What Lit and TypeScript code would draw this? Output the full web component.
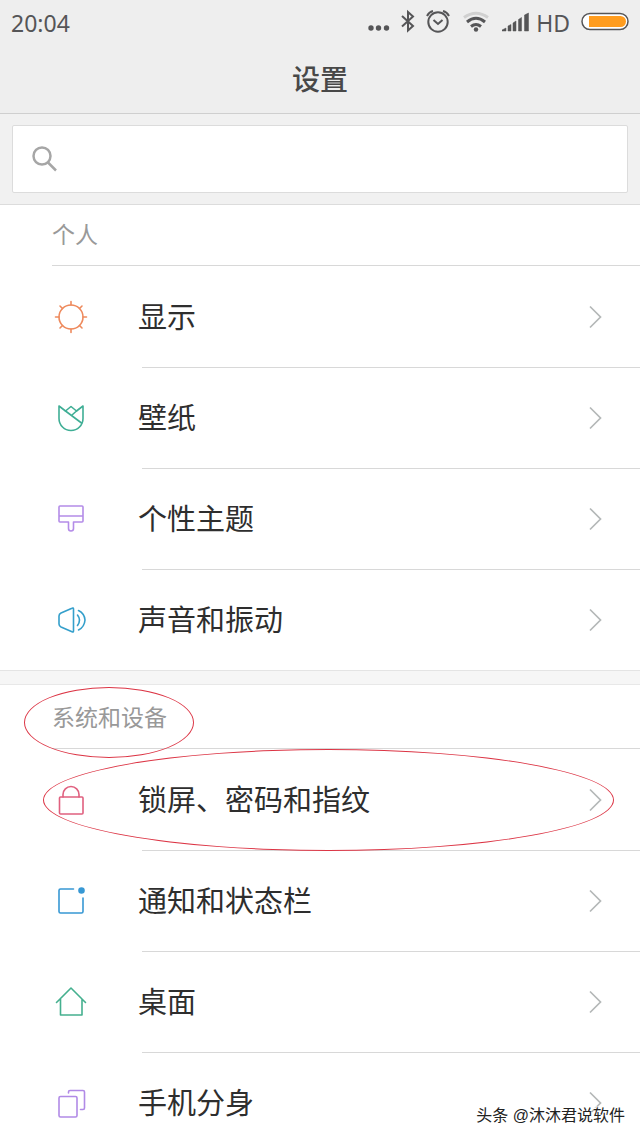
import { LitElement, html, css, svg, TemplateResult } from "lit";
import { customElement } from "lit/decorators.js";

interface Item {
  label: string;
  color: string;
  icon: TemplateResult;
}

const personal: Item[] = [
  {
    label: "显示",
    color: "#ee8a5d",
    icon: svg`<circle cx="18" cy="18" r="12"/>
      <path d="M18 6V2.5M18 30v3.5M6 18H2.5M30 18h3.5M9.5 9.5 7 7M26.5 9.5 29 7M9.5 26.5 7 29M26.5 26.5 29 29"/>`,
  },
  {
    label: "壁纸",
    color: "#3fae95",
    icon: svg`<path d="M12.5 11 6 6v12.500a12 12 0 0 0 24 0V6l-6.500 5"/>
      <path d="M12.5 11 18 6.500 23.500 11 19 15M12.500 11 28.500 23"/>`,
  },
  {
    label: "个性主题",
    color: "#b48ce8",
    icon: svg`<path d="M7 5h22a1 1 0 0 1 1 1v14a1 1 0 0 1-1 1h-8.5v6.500a2.500 2.500 0 0 1-5 0V21H7a1 1 0 0 1-1-1V6a1 1 0 0 1 1-1ZM6 15h24"/>`,
  },
  {
    label: "声音和振动",
    color: "#349fcb",
    icon: svg`<path d="M20.5 7v22q0 1.500-1.500.8L8 25q-2-1-2-3v-8q0-2 2-3l11-4.800q1.500-.7 1.500.8Z"/>
      <path d="M24.500 13q4 5 0 10.500M25.500 8.500q6 3 6.500 9.500-.5 7-6.500 10"/>`,
  },
];

const device: Item[] = [
  {
    label: "锁屏、密码和指纹",
    color: "#e0607f",
    icon: svg`<rect x="6.5" y="15" width="23.5" height="17" rx="1"/>
      <path d="M10 15v-2.500a8 8 0 0 1 16 0V15"/>`,
  },
  {
    label: "通知和状态栏",
    color: "#3798d4",
    icon: svg`<path d="M20.5 6H7.500Q6 6 6 7.500v21Q6 30 7.500 30h21q1.500 0 1.500-1.500V15"/>
      <circle cx="28.5" cy="7.5" r="2.5" fill="currentColor"/>`,
  },
  {
    label: "桌面",
    color: "#45b08f",
    icon: svg`<path d="M3.500 18.500 18 4l14.500 14.500M7.500 15v16h21.500V15"/>`,
  },
  {
    label: "手机分身",
    color: "#b18ae6",
    icon: svg`<rect x="6" y="11.5" width="18" height="20.5" rx="1.5"/>
      <path d="M15.500 8V7q0-1.500 1.500-1.500h13q1.500 0 1.500 1.500v16q0 1.500-1.500 1.500h-2.500"/>`,
  },
];

@customElement("status-bar")
class StatusBar extends LitElement {
  static styles = css`
    :host {
      display: flex;
      align-items: center;
      justify-content: space-between;
      height: 46px;
      padding: 0 11px;
      font-family: "Noto Sans", sans-serif;
      font-size: 23px;
      line-height: 30px;
      color: #555557;
    }
    .tray {
      display: flex;
      align-items: center;
    }
    .tray svg {
      display: block;
      fill: none;
      stroke: currentColor;
    }
    .dots,
    .bluetooth {
      margin-right: 11px;
    }
    .alarm,
    .wifi {
      margin-right: 12px;
    }
    .signal {
      margin-right: 7px;
    }
    .battery {
      margin-left: 11px;
    }
  `;

  render() {
    return html`
      <time>20:04</time>
      <div class="tray">
        <svg class="dots" width="22" height="30" viewBox="0 0 22 30" aria-hidden="true">
          <g fill="currentColor" stroke="none">
            <circle cx="3" cy="20" r="2.7" /><circle cx="10.5" cy="20" r="2.7" /><circle cx="18.500" cy="20" r="2.7" />
          </g>
        </svg>
        <svg class="bluetooth" width="14" height="30" viewBox="0 0 14 30" stroke-width="2" aria-hidden="true">
          <path d="M1 8 12 18 7 22.500V4l5 4.500L1 18.500" />
        </svg>
        <svg class="alarm" width="24" height="30" viewBox="0 0 24 30" stroke-width="2" aria-hidden="true">
          <circle cx="12" cy="14" r="9.7" />
          <path d="M7.500 12 12 16l4.500-4M1 8q2-4 6-5M23 8q-2-4-6-5" />
        </svg>
        <svg class="wifi" width="28" height="30" viewBox="0 0 28 30" stroke-width="3" aria-hidden="true">
          <path d="M2 9.500q12-8.500 24 0" stroke="#d0d0d0" />
          <path d="M5 14q9-7.500 18 0M9 18.500q5-4 10 0" />
          <circle cx="14" cy="21.5" r="2.2" fill="currentColor" stroke="none" />
        </svg>
        <svg class="signal" width="27" height="30" viewBox="0 0 27 30" aria-hidden="true">
          <path
            d="M0 23v-1l4-2v3ZM6 23v-5l3-1.500V23ZM11 23v-8l3-2v10ZM16.500 23V11.500l3-2V23ZM22.500 23V7l4-2v18Z"
            fill="currentColor"
            stroke="currentColor"
            stroke-width=".5"
          />
        </svg>
        <span>HD</span>
        <svg class="battery" width="48" height="30" viewBox="0 0 48 30" aria-hidden="true">
          <rect x="1" y="5.5" width="46" height="16" rx="8" fill="#fff" stroke-width="1.5" />
          <path d="M8 8h31.500a5.500 5.500 0 0 1 0 11H8Z" fill="#ff9c1e" stroke="none" />
        </svg>
      </div>
    `;
  }
}

@customElement("settings-row")
class SettingsRow extends LitElement {
  static properties = { item: { attribute: false } };
  declare item: Item;

  static styles = css`
    :host {
      display: block;
    }
    .row {
      display: grid;
      grid-template-columns: 36px 1fr 14px;
      align-items: center;
      height: 101px;
      padding: 0 38px 0 53px;
      color: #2e2e2e;
      text-decoration: none;
    }
    .icon {
      display: block;
      fill: none;
      stroke: currentColor;
      stroke-width: 1.6;
      stroke-linejoin: round;
      stroke-linecap: round;
    }
    .label {
      padding: 0 0 4px 49px;
      font-size: 29px;
      line-height: 44px;
    }
    .chevron {
      display: block;
      fill: none;
      stroke: #b4b8b8;
      stroke-width: 1.7;
    }
  `;

  render() {
    return html`
      <a class="row" href="#">
        <svg class="icon" width="36" height="36" viewBox="0 0 36 36" style="color:${this.item.color}" aria-hidden="true">
          ${this.item.icon}
        </svg>
        <span class="label">${this.item.label}</span>
        <svg class="chevron" width="14" height="24" viewBox="0 0 14 24" aria-hidden="true">
          <path d="M2 1.500 12.500 12 2 22.500" />
        </svg>
      </a>
    `;
  }
}

@customElement("app-root")
class AppRoot extends LitElement {
  static styles = css`
    :host {
      display: block;
      position: relative;
      height: 100vh;
      overflow: hidden;
      background: #fff;
      font-family: "Noto Sans CJK SC", sans-serif;
    }
    .top {
      background: #eee;
      border-bottom: 1px solid #cfcfcf;
    }
    .title {
      margin: 0;
      padding: 11px 0 14px;
      font-size: 28px;
      line-height: 42px;
      font-weight: 500;
      text-align: center;
      color: #484848;
    }
    .search {
      padding: 11px 12px;
      background: #f1f1f1;
      border-bottom: 1px solid #dcdcdc;
    }
    .field {
      display: flex;
      align-items: center;
      gap: 12px;
      height: 66px;
      padding: 0 19px;
      background: #fff;
      border: 1px solid #dcdcdc;
      border-radius: 2px;
    }
    .field svg {
      flex: none;
      fill: none;
      stroke: #a6a6a6;
      stroke-width: 2.5;
    }
    .query {
      flex: 1;
      min-width: 0;
      height: 44px;
      padding: 0;
      border: 0;
      outline: 0;
      background: none;
      font: inherit;
      font-size: 23px;
      color: #2e2e2e;
    }
    .group {
      position: relative;
    }
    .heading {
      margin: 0 0 0 52px;
      padding: 10px 0 14px;
      border-bottom: 1px solid #d8d8d8;
      font-size: 23px;
      line-height: 36px;
      font-weight: 400;
      color: #999;
    }
    .device .heading {
      padding: 13px 0 14px;
    }
    .list {
      margin: 0;
      padding: 0;
      list-style: none;
    }
    .entry + .entry::before {
      content: "";
      display: block;
      height: 1px;
      margin: 0 0 -1px 142px;
      background: #d8d8d8;
    }
    .gap {
      height: 13px;
      background: #f6f6f6;
      border-top: 1px solid #e4e4e4;
      border-bottom: 1px solid #e8e8e8;
    }
    .mark {
      position: absolute;
      box-sizing: border-box;
      border: 1px solid #dc3545;
      border-radius: 50%;
      pointer-events: none;
    }
    .mark-heading {
      left: 24px;
      top: 2px;
      width: 170px;
      height: 71px;
    }
    .mark-row {
      left: 43px;
      right: 26px;
      top: 64px;
      height: 102px;
    }
    .watermark {
      position: absolute;
      right: 15px;
      bottom: 10px;
      font-family: "Liberation Sans", "Noto Sans CJK SC", sans-serif;
      font-size: 16px;
      line-height: 24px;
      color: #222;
      text-shadow: -1px -1px 0 #fff, 1px 1px 0 #fff;
    }
  `;

  private list(items: Item[]) {
    return html`<ul class="list">
      ${items.map((item) => html`<li class="entry"><settings-row .item=${item}></settings-row></li>`)}
    </ul>`;
  }

  render() {
    return html`
      <header class="top">
        <status-bar></status-bar>
        <h1 class="title">设置</h1>
      </header>
      <div class="search">
        <label class="field">
          <svg width="26" height="28" viewBox="0 0 26 28" aria-hidden="true">
            <circle cx="10" cy="11" r="8.5" />
            <path d="m16 17.500 8 8" />
          </svg>
          <input class="query" type="search" aria-label="搜索" />
        </label>
      </div>
      <section class="group">
        <h2 class="heading">个人</h2>
        ${this.list(personal)}
      </section>
      <div class="gap"></div>
      <section class="group device">
        <h2 class="heading">系统和设备</h2>
        ${this.list(device)}
        <div class="mark mark-heading"></div>
        <div class="mark mark-row"></div>
      </section>
      <div class="watermark">头条 @沐沐君说软件</div>
    `;
  }
}
